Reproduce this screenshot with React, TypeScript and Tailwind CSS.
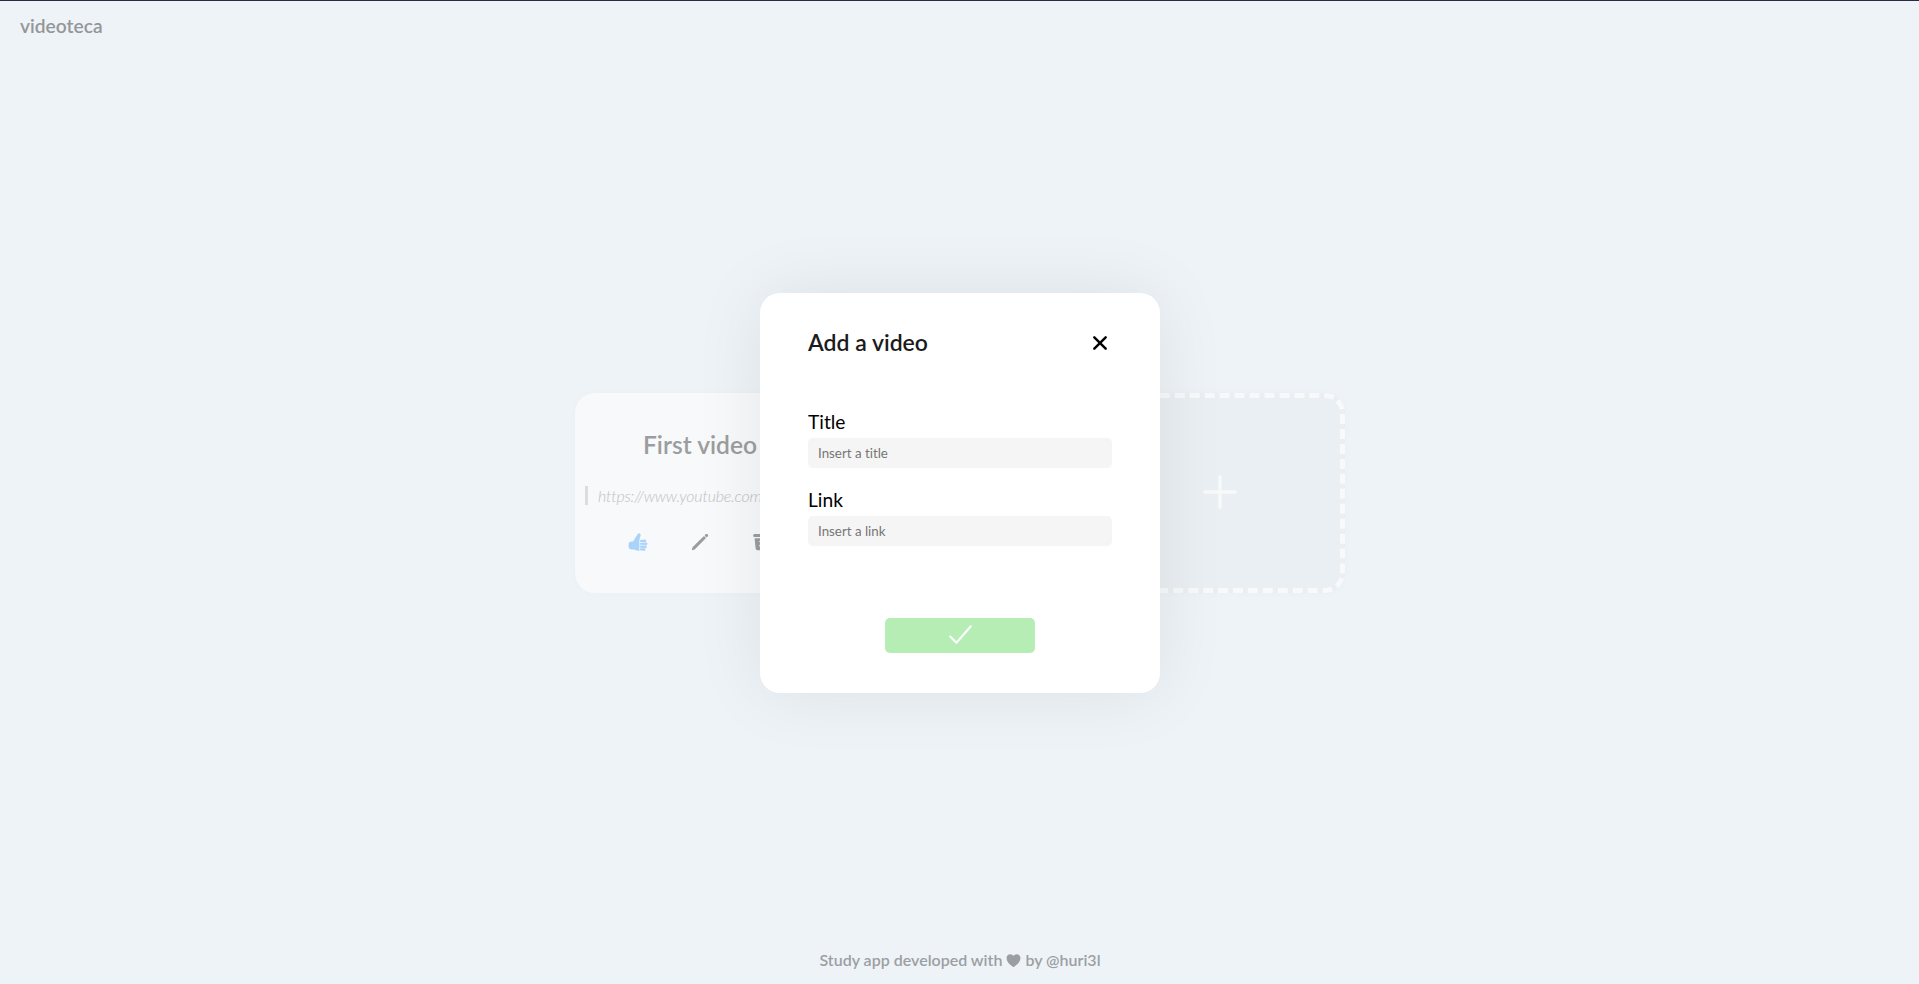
import type { ReactNode } from "react";
import {
  IoAdd,
  IoCheckmark,
  IoClose,
  IoHeart,
  IoPencil,
  IoThumbsUp,
  IoTrashBin,
} from "react-icons/io5";

function VideoCard({ title, link }: { title: string; link: string }) {
  return (
    <article className="flex h-[200px] w-[250px] flex-col items-center rounded-[20px] bg-[#f7f9fa] shadow-[0_0_10px_rgba(0,0,0,0.02)]">
      <h2 className="mt-[37px] text-[24.6px] leading-[29px] font-semibold text-[#9c9d9e]">
        {title}
      </h2>
      <p className="mt-[27px] ml-[10px] h-[19px] self-stretch overflow-hidden border-l-[3px] border-[#dcdddf] pl-[10px] text-[16px] leading-[19px] font-light tracking-[-0.2px] whitespace-nowrap text-[#c0c1c2] italic">
        {link}
      </p>
      <div className="mt-[27px] flex gap-[42.4px] text-[20px] text-[#9c9d9e]">
        <IoThumbsUp className="text-[#a9d3fa]" />
        <IoPencil />
        <IoTrashBin />
      </div>
    </article>
  );
}

function AddCard() {
  return (
    <div className="flex h-[200px] w-[250px] items-center justify-center rounded-[20px] border-[5px] border-dashed border-[#f7f9fa] bg-[#eaeff3] text-[#f7f9fa] shadow-[0_0_10px_rgba(0,0,0,0.02)]">
      <IoAdd className="mb-[2px] size-[54px]" />
    </div>
  );
}

function Field({ label, placeholder }: { label: string; placeholder: string }) {
  return (
    <label className="flex flex-col text-[19.2px] leading-[24px] text-black">
      {label}
      <input
        placeholder={placeholder}
        className="mt-[4px] h-[30px] rounded-[5px] bg-[#f5f5f5] px-[10px] text-[13.333px] leading-[16px] outline-none placeholder:text-[#757575]"
      />
    </label>
  );
}

function Modal({ title, children }: { title: string; children: ReactNode }) {
  return (
    <div className="absolute inset-0 flex items-center justify-center pl-px">
      <section className="flex h-[400px] w-[400px] flex-col rounded-[20px] bg-white px-[48px] shadow-[0_0_70px_rgba(0,0,0,0.08)]">
        <header className="mt-[34px] flex items-center justify-between">
          <h1 className="text-[23px] leading-[31px] font-semibold text-[#1b1b1b]">{title}</h1>
          <IoClose className="mt-px -mr-[0.5px] size-[26px] text-black" />
        </header>
        {children}
      </section>
    </div>
  );
}

export default function App() {
  return (
    <div className="relative flex h-[984px] flex-col overflow-hidden border-t border-[#2b2b3f] bg-[#eef3f8] font-[Lato,sans-serif] [font-variant-ligatures:none]">
      <header className="px-[20px] pt-[13px] text-[19.2px] leading-[24px] font-semibold text-[#949698]">
        videoteca
      </header>
      <main className="flex flex-1 items-center justify-center pb-[3px] pl-px">
        <div className="flex w-[770px] justify-between">
          <VideoCard title="First video" link="https://www.youtube.com" />
          <AddCard />
        </div>
      </main>
      <footer className="flex items-center justify-center pb-[14px] pl-px text-[16px] leading-[20px] font-semibold text-[#9c9fa2]">
        Study app developed with
        <IoHeart className="mx-[3px] size-[17px]" />
        by @huri3l
      </footer>
      <Modal title="Add a video">
        <div className="mt-[52px] flex flex-col gap-[20px]">
          <Field label="Title" placeholder="Insert a title" />
          <Field label="Link" placeholder="Insert a link" />
        </div>
        <button className="mt-[72px] flex h-[35px] w-[150px] justify-center self-center rounded-[5px] bg-[#b5edb5] text-white">
          <IoCheckmark className="size-[33px]" />
        </button>
      </Modal>
    </div>
  );
}
